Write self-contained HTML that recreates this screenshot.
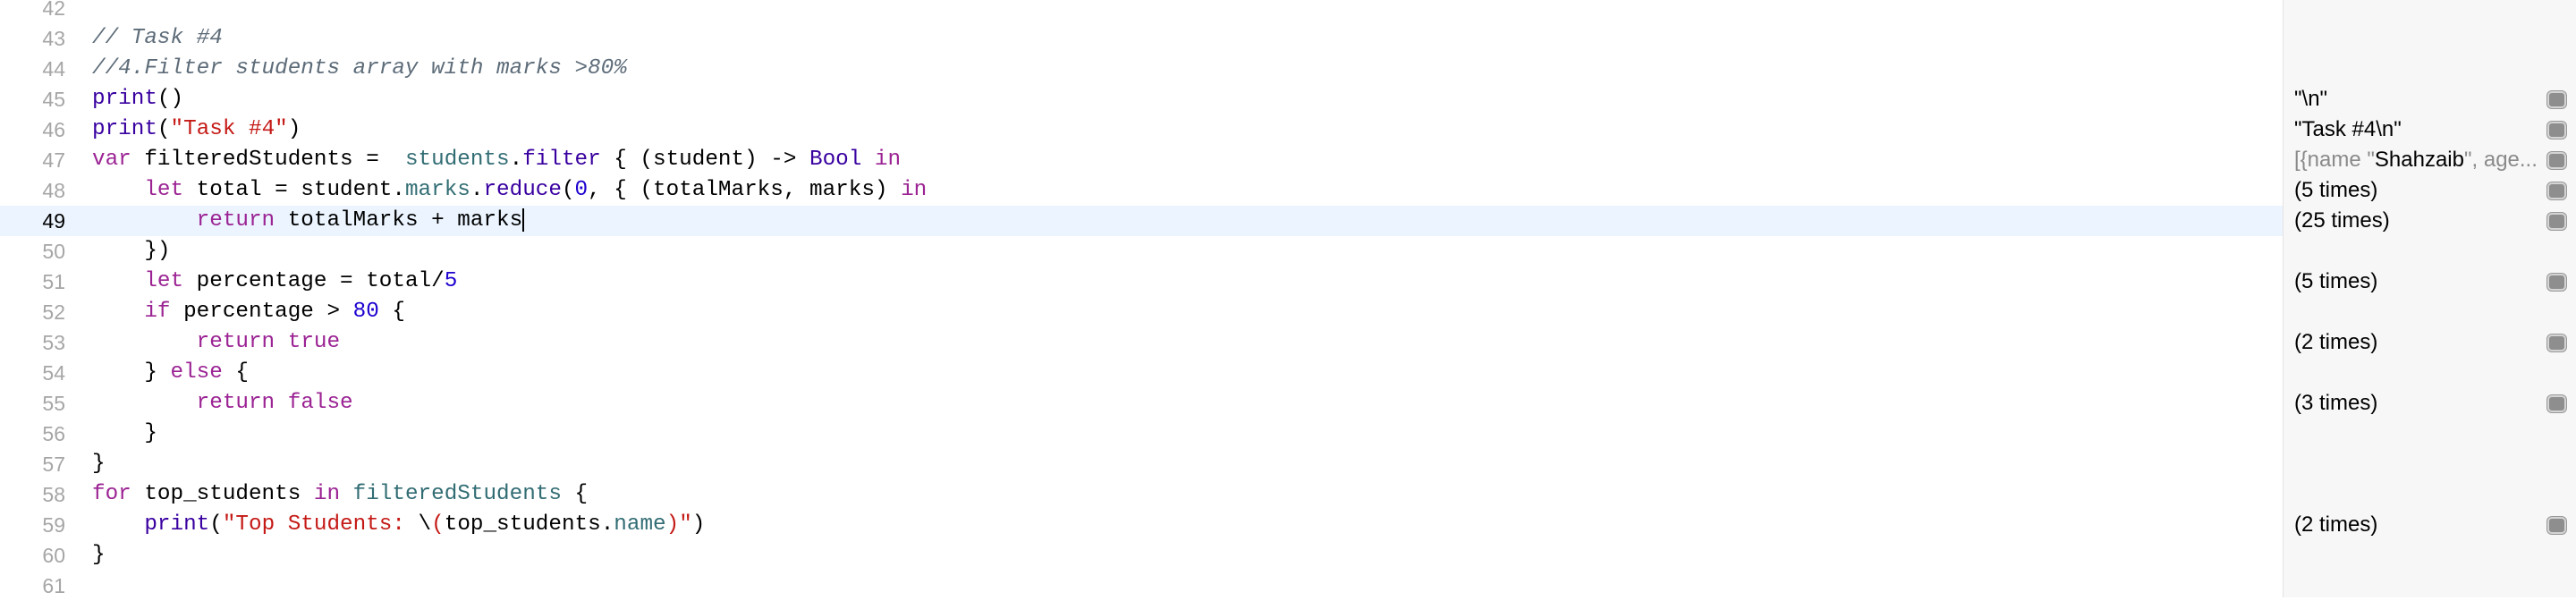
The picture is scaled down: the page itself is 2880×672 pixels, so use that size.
<!DOCTYPE html>
<html><head><meta charset="utf-8"><style>
body{margin:0;width:2880px;height:668px;background:#fff;position:relative;overflow:hidden}
.hl{position:absolute;left:0;top:230px;width:2552px;height:34px;background:#ecf5ff}
.side{position:absolute;left:2552px;top:0;width:328px;height:668px;background:#f7f7f7;border-left:1px solid #e3e3e3}
.ln{position:absolute;left:0;width:73px;text-align:right;font:23px "Liberation Sans Narrow","Liberation Sans",sans-serif;color:#a6a6a6;height:34px;line-height:34px}
.cd{position:absolute;left:103px;font:24.3px "Liberation Mono",monospace;color:#000;white-space:pre;height:34px;line-height:34px}
.k{color:#9b2393}.f{color:#3900a0}.s{color:#c41a16}.c{color:#5d6c79;font-style:italic}.t{color:#326d74}.n{color:#1c00cf}
.r{position:absolute;left:2565px;width:276px;overflow:hidden;font:24px "Liberation Sans",sans-serif;color:#000;height:34px;line-height:34px;white-space:pre}
.g{color:#8a8a8a}
.ic{position:absolute;left:2848px;width:17px;height:15px;background:#8e8e8e;border:2px solid #d4d4d4;border-radius:5px;box-shadow:0 0 0 1px #999}
.cur{display:inline-block;width:2px;height:26px;background:#000;vertical-align:middle}
</style></head><body>
<div class="hl"></div>
<div class="side"></div>
<div class="ln" style="top:-8px">42</div>
<div class="ln" style="top:26px">43</div>
<div class="ln" style="top:60px">44</div>
<div class="ln" style="top:94px">45</div>
<div class="ln" style="top:128px">46</div>
<div class="ln" style="top:162px">47</div>
<div class="ln" style="top:196px">48</div>
<div class="ln" style="top:230px;color:#000">49</div>
<div class="ln" style="top:264px">50</div>
<div class="ln" style="top:298px">51</div>
<div class="ln" style="top:332px">52</div>
<div class="ln" style="top:366px">53</div>
<div class="ln" style="top:400px">54</div>
<div class="ln" style="top:434px">55</div>
<div class="ln" style="top:468px">56</div>
<div class="ln" style="top:502px">57</div>
<div class="ln" style="top:536px">58</div>
<div class="ln" style="top:570px">59</div>
<div class="ln" style="top:604px">60</div>
<div class="ln" style="top:638px">61</div>

<div class="cd c" style="top:26px">// Task #4</div>
<div class="cd c" style="top:60px">//4.Filter students array with marks &gt;80%</div>
<div class="cd" style="top:94px"><span class="f">print</span>()</div>
<div class="cd" style="top:128px"><span class="f">print</span>(<span class="s">"Task #4"</span>)</div>
<div class="cd" style="top:162px"><span class="k">var</span> filteredStudents =  <span class="t">students</span>.<span class="f">filter</span> { (student) -&gt; <span class="f">Bool</span> <span class="k">in</span></div>
<div class="cd" style="top:196px">    <span class="k">let</span> total = student.<span class="t">marks</span>.<span class="f">reduce</span>(<span class="n">0</span>, { (totalMarks, marks) <span class="k">in</span></div>
<div class="cd" style="top:230px">        <span class="k">return</span> totalMarks + marks<span class="cur"></span></div>
<div class="cd" style="top:264px">    })</div>
<div class="cd" style="top:298px">    <span class="k">let</span> percentage = total/<span class="n">5</span></div>
<div class="cd" style="top:332px">    <span class="k">if</span> percentage &gt; <span class="n">80</span> {</div>
<div class="cd" style="top:366px">        <span class="k">return</span> <span class="k">true</span></div>
<div class="cd" style="top:400px">    } <span class="k">else</span> {</div>
<div class="cd" style="top:434px">        <span class="k">return</span> <span class="k">false</span></div>
<div class="cd" style="top:468px">    }</div>
<div class="cd" style="top:502px">}</div>
<div class="cd" style="top:536px"><span class="k">for</span> top_students <span class="k">in</span> <span class="t">filteredStudents</span> {</div>
<div class="cd" style="top:570px">    <span class="f">print</span>(<span class="s">"Top Students: </span>\<span class="s">(</span>top_students.<span class="t">name</span><span class="s">)"</span>)</div>
<div class="cd" style="top:604px">}</div>

<div class="r" style="top:94px">"\n"</div>
<div class="r" style="top:128px">"Task #4\n"</div>
<div class="r" style="top:162px"><span class="g">[{name "</span>Shahzaib<span class="g">", age...</span></div>
<div class="r" style="top:196px">(5 times)</div>
<div class="r" style="top:230px">(25 times)</div>
<div class="r" style="top:298px">(5 times)</div>
<div class="r" style="top:366px">(2 times)</div>
<div class="r" style="top:434px">(3 times)</div>
<div class="r" style="top:570px">(2 times)</div>

<div class="ic" style="top:102px"></div>
<div class="ic" style="top:136px"></div>
<div class="ic" style="top:170px"></div>
<div class="ic" style="top:204px"></div>
<div class="ic" style="top:238px"></div>
<div class="ic" style="top:306px"></div>
<div class="ic" style="top:374px"></div>
<div class="ic" style="top:442px"></div>
<div class="ic" style="top:578px"></div>
</body></html>
